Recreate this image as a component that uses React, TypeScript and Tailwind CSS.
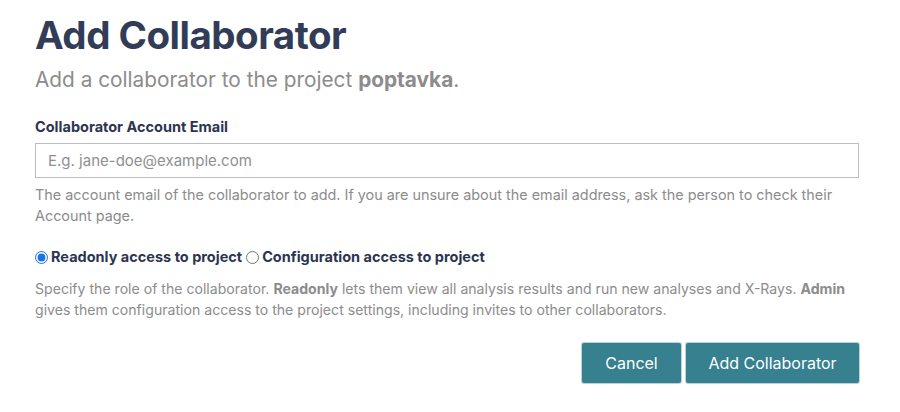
import React, { useState } from 'react';

const App: React.FC = () => {
  const [role, setRole] = useState<'readonly' | 'admin'>('readonly');
  const [email, setEmail] = useState('');

  return (
    <div className="min-h-screen bg-white font-['Inter',sans-serif]">
      <div className="w-[824px] ml-[35px] pt-[10px]">
        <h1 className="text-[38.5px] leading-[50px] font-bold text-[#323c57] tracking-[-0.5px]">Add Collaborator</h1>
        <p className="mt-[5px] text-[20.8px] leading-[30px] text-[#8c8c8c]">
          Add a collaborator to the project <span className="font-bold">poptavka</span>.
        </p>

        <label className="block mt-[22px] text-[14.5px] leading-[20px] font-bold text-[#2c3550]">
          Collaborator Account Email
        </label>
        <input
          type="email"
          value={email}
          onChange={(e) => setEmail(e.target.value)}
          placeholder="E.g. jane-doe@example.com"
          className="mt-[6px] block w-full h-[35px] border border-[#bdbdbd] px-[12px] text-[15px] text-[#333] placeholder:text-[#8f8f8f] outline-none"
        />
        <p className="mt-[6px] text-[14.4px] leading-[21px] text-[#8c8c8c]">
          The account email of the collaborator to add. If you are unsure about the email address, ask the person to check their Account page.
        </p>

        <div className="mt-[21px] flex items-center text-[14.5px] leading-[20px] font-bold text-[#2c3550]">
          <label className="flex items-center">
            <input
              type="radio"
              name="role"
              checked={role === 'readonly'}
              onChange={() => setRole('readonly')}
              className="w-[13px] h-[13px] m-0 mr-[3px] accent-[#1a73e8]"
            />
            Readonly access to project
          </label>
          <label className="flex items-center ml-[4px]">
            <input
              type="radio"
              name="role"
              checked={role === 'admin'}
              onChange={() => setRole('admin')}
              className="w-[13px] h-[13px] m-0 mr-[3px] accent-[#1a73e8]"
            />
            Configuration access to project
          </label>
        </div>
        <p className="mt-[11px] text-[14.1px] leading-[21px] text-[#8c8c8c]">
          Specify the role of the collaborator. <span className="font-bold">Readonly</span> lets them view all analysis results and run new analyses and X-Rays. <span className="font-bold">Admin</span> gives them configuration access to the project settings, including invites to other collaborators.
        </p>

        <div className="mt-[23px] flex justify-end gap-[5px]">
          <button className="w-[99px] h-[40px] rounded-[2px] bg-[#37808f] text-white text-[16px] shadow-[0_0_0_1px_#b9d3dc]">
            Cancel
          </button>
          <button className="w-[173px] h-[40px] rounded-[2px] bg-[#37808f] text-white text-[16px] shadow-[0_0_0_1px_#b9d3dc]">
            Add Collaborator
          </button>
        </div>
      </div>
    </div>
  );
};

export default App;
